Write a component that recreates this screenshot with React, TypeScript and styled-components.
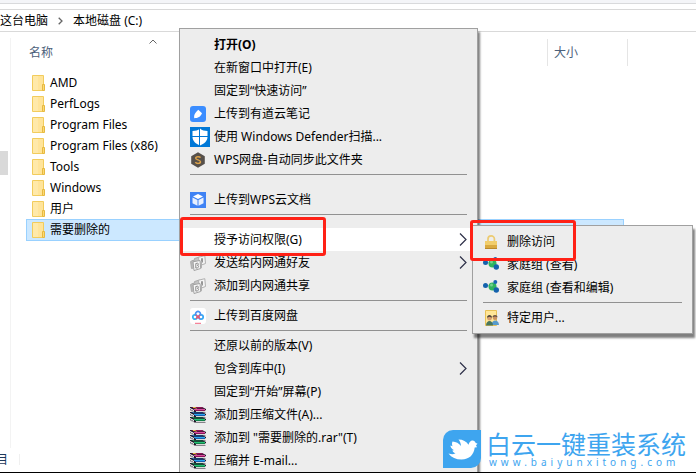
import React from "react";
import styled, { createGlobalStyle, css } from "styled-components";

const GlobalStyle = createGlobalStyle`
  *, *::before, *::after { box-sizing: border-box; }
  body {
    margin: 0;
    background: #fff;
    color: #000;
    font: 12px/16px "Noto Sans", "Noto Sans CJK SC", sans-serif;
  }
  button { font: inherit; color: inherit; }
`;

const Explorer = styled.div`
  position: relative;
  display: flex;
  flex-direction: column;
  height: 100vh;
  overflow: hidden;
  border-bottom: 1px solid #000;
  background: #fff;
`;

const Ribbon = styled.div`
  height: 4px;
  background: #f4f5f8;
  border-bottom: 1px solid #d9dadc;
`;

const AddressBar = styled.nav`
  display: flex;
  align-items: center;
  gap: 10px;
  height: 23px;
  margin-top: 5px;
  border-top: 1px solid #d9d9d9;
  border-bottom: 1px solid #d9d9d9;
`;

const Crumb = styled.a`
  color: #000;
  text-decoration: none;
  white-space: nowrap;
`;

const Body = styled.div`
  display: flex;
  flex: 1;
  min-height: 0;
`;

const NavPane = styled.div`
  width: 11px;
  margin: 6px 0 0;
  padding-top: 113px;
  border-right: 1px solid #f3f3f3;
`;

const ScrollThumb = styled.div`
  width: 8px;
  height: 24px;
  background: #d9d9d9;
`;

const FilePane = styled.main`
  flex: 1;
  min-width: 0;
  padding: 7px 0 0 15px;
`;

const FileTable = styled.table`
  table-layout: fixed;
  width: 602px;
  border-collapse: separate;
  border-spacing: 0;
`;

const HeadCell = styled.th<{ $width: number; $divided?: boolean }>`
  position: relative;
  width: ${(p) => p.$width}px;
  height: 27px;
  padding: 0 0 0 ${(p) => (p.$divided ? 6 : 3)}px;
  border-left: ${(p) => (p.$divided ? "1px solid #e5e5e5" : "0")};
  color: #4c607a;
  font-weight: 400;
  text-align: left;
`;

const EdgeCell = styled.th`
  width: 4px;
  padding: 0;
  border-right: 1px solid #e5e5e5;
`;

const SortArrow = styled.svg`
  position: absolute;
  left: 123px;
  top: 0;
`;

const SpacerCell = styled.td`
  height: 6px;
  padding: 0;
`;

const FileCell = styled.td<{ $selected?: boolean }>`
  height: 21px;
  padding: 0 6px;
  ${(p) =>
    p.$selected &&
    css`
      height: 22px;
      padding: 0 5px;
      background: #cce8ff;
      border: 1px solid #99d1ff;
    `}
`;

const FileName = styled.div`
  display: flex;
  align-items: center;
  gap: 4px;
  height: 20px;
  font-size: 12px;
`;

const StatusBar = styled.footer`
  display: flex;
  align-items: center;
  height: 24px;
  padding-bottom: 1px;
  color: #1e395b;
`;

const StatusLabel = styled.span`
  width: 20px;
  height: 12px;
  margin-left: -4px;
  line-height: 12px;
`;

const StatusDivider = styled.span`
  width: 1px;
  height: 11px;
  margin-left: 3px;
  background: #f0f0f0;
`;

const Menu = styled.div<{ $left: number; $top: number; $width: number }>`
  position: absolute;
  left: ${(p) => p.$left}px;
  top: ${(p) => p.$top}px;
  width: ${(p) => p.$width}px;
  padding: 4px 1px;
  background: #ededed;
  border: 1px solid #a0a0a0;
  box-shadow: 2px 4px 2px rgba(0, 0, 0, 0.5);
`;

const MenuButton = styled.button<{ $bold?: boolean; $active?: boolean }>`
  display: flex;
  align-items: center;
  width: 100%;
  height: 23px;
  padding: 0 9px;
  border: 0;
  background: ${(p) => (p.$active ? "#fff" : "transparent")};
  font-weight: ${(p) => (p.$bold ? 700 : 400)};
  text-align: left;
  white-space: nowrap;
`;

const IconSlot = styled.span`
  display: flex;
  flex: none;
  width: 24px;
`;

const MenuText = styled.span`
  flex: 1;
`;

const Separator = styled.hr<{ $loose?: boolean }>`
  height: 1px;
  margin: 3px 9px ${(p) => (p.$loose ? 13 : 3)}px;
  border: 0;
  background: #919191;
`;

const Highlight = styled.div<{ $left: number; $top: number; $width: number; $height: number }>`
  position: absolute;
  left: ${(p) => p.$left}px;
  top: ${(p) => p.$top}px;
  width: ${(p) => p.$width}px;
  height: ${(p) => p.$height}px;
  border: 3px solid #ff2116;
  border-radius: 3px;
  pointer-events: none;
`;

const Watermark = styled.div`
  position: absolute;
  right: 10px;
  bottom: 4px;
  display: flex;
  align-items: center;
  gap: 5px;
  color: #3ea5ef;
`;

const BrandText = styled.div`
  display: flex;
  flex-direction: column;
`;

const BrandName = styled.span`
  font-size: 25px;
  line-height: 26px;
  font-weight: 400;
  font-family: "Noto Sans CJK SC", sans-serif;
`;

const BrandUrl = styled.span`
  padding-left: 3px;
  font-size: 10px;
  line-height: 12px;
  letter-spacing: 4px;
`;

const Folder = () => (
  <svg width="14" height="16" viewBox="0 0 14 16" aria-hidden="true">
    <path d="M.5.5h11v15H.5z" fill="#ffe49a" stroke="#f2cc5c" />
    <path d="M1 1h5v14H1z" fill="#ffe9a9" />
    <path d="M10.500 9.500h2v6h-2z" fill="#fbd977" stroke="#e7b93f" />
  </svg>
);

const Chevron = () => (
  <svg width="8" height="13" viewBox="0 0 8 13" fill="none" aria-hidden="true">
    <path d="M1 .5l6 6-6 6" stroke="#2d3048" strokeWidth="1.200" />
  </svg>
);

const NoteIcon = () => (
  <svg width="16" height="16" viewBox="0 0 16 16" aria-hidden="true">
    <rect width="16" height="16" rx="3" fill="#3b8dff" />
    <path d="M4.300 12.200C3.800 9.500 4.500 7.500 8.300 3.800L12 7.300c-1.500 3.700-4 4.900-7.700 4.900z" fill="#fff" />
  </svg>
);

const DefenderIcon = () => (
  <svg width="20" height="20" viewBox="0 0 20 20" aria-hidden="true">
    <path d="M0 0h20v20H0z" fill="#0078d7" />
    <path d="M10 1.500C8 3.300 5.500 4 2.500 4v6c0 4 3.500 7 7.500 8.500 4-1.500 7.500-4.500 7.500-8.500V4C14.500 4 12 3.300 10 1.500z" fill="#fff" />
    <path d="M9 1h1v18H9zM2 9h16v1H2z" fill="#0078d7" />
  </svg>
);

const WpsDiskIcon = () => (
  <svg width="16" height="16" viewBox="0 0 16 16" aria-hidden="true">
    <path d="M8 .3l6.800 3.900v7.600L8 15.700l-6.800-3.900V4.200z" fill="#56504b" />
    <path d="M10.500 5.700C9.800 4.300 5.700 4.100 5.700 6.200c0 2 4.800 1.400 4.800 3.600 0 2.100-4.200 2-5.100.3" fill="none" stroke="#dca24a" strokeWidth="1.500" />
  </svg>
);

const CloudDocIcon = () => (
  <svg width="16" height="16" viewBox="0 0 16 16" aria-hidden="true">
    <path d="M0 0h16v16H0z" fill="#3f82f4" />
    <path d="M8 2l5 2.400L8 7 3 4.400z" fill="#fff" />
    <path d="M2.500 5.500L7.500 8v5.800l-5-2.600zM13.500 5.500L8.500 8v5.800l5-2.600z" fill="#e8f0ff" />
  </svg>
);

const ShareIcon = () => (
  <svg width="16" height="16" viewBox="0 0 16 16" aria-hidden="true">
    <path d="M4.500 3.500l5-1.500.5 5-5 1z" fill="#c4c4c4" stroke="#aaa" />
    <path d="M8.500 2.200L14.800.7l.7 7.800-6 2.200z" fill="#f4f4f4" stroke="#b0b0b0" />
    <path d="M12 3.200v4.300" stroke="#777" strokeWidth="1.500" />
    <path d="M.6 6.500L3.500 5v8l-2 .5z" fill="#b9b9b9" stroke="#aaa" />
    <path d="M3 6.800l7-1.300.7 8-6.700 2z" fill="#f8f8f8" stroke="#a2a2a2" />
    <path d="M10.500 6.500l1.500-.7v7l-1.300.7z" fill="#b0b0b0" />
    <path d="M5.800 8.500l1.700-.3c1.300 0 1 1.900-.2 2.100 1.800 0 1.600 2.300.1 2.600l-1.600.2z" fill="none" stroke="#8a8a8a" />
  </svg>
);

const BaiduIcon = () => (
  <svg width="16" height="16" viewBox="0 0 16 16" fill="none" aria-hidden="true">
    <rect width="16" height="16" rx="3" fill="#fff" />
    <circle cx="5" cy="9" r="2.200" stroke="#35b5f5" strokeWidth="1.700" />
    <circle cx="11" cy="9" r="2.200" stroke="#35a5f5" strokeWidth="1.700" />
    <path d="M6 7.200a2.400 2.400 0 114 0" stroke="#4993f5" strokeWidth="1.600" />
    <path d="M6 7l4 3.800M10 7l-4 3.800" stroke="#f1516e" strokeWidth="1.500" />
    <path d="M5 15.300h6" stroke="#f46480" />
  </svg>
);

const Book = ({ y, fill, light }: { y: number; fill: string; light: string }) => (
  <g transform={`translate(0 ${y})`}>
    <path d="M0 0h12l4 2v1l-1 .5V5l1 .5H4.500L0 3.500z" fill="#201829" />
    <path d="M1 0h10.500l3 1.500H4z" fill={fill} />
    <path d="M4 2h11v1H4z" fill={light} />
    <path d="M5 3h10v1H5z" fill={fill} />
    <path d="M6 4h9v1H6z" fill="#d8d8d8" />
    <path d="M0 1l4 2v1.200L0 2z" fill="#fff" />
    <path d="M0 3l4 2" stroke="#fff" strokeWidth=".7" />
  </g>
);

const RarIcon = () => (
  <svg width="16" height="16" viewBox="0 0 16 16" aria-hidden="true">
    <Book y={10} fill="#12824a" light="#24c475" />
    <Book y={5} fill="#155fae" light="#2ba4ef" />
    <Book y={0} fill="#8c1457" light="#d94ca0" />
    <path d="M3 .5h2l1.500 1" fill="none" stroke="#e0c23a" />
  </svg>
);

const LockIcon = () => (
  <svg width="16" height="16" viewBox="0 0 16 16" aria-hidden="true">
    <path d="M5 8V5a3.200 3.200 0 016.400 0v3" fill="none" stroke="#eccb72" strokeWidth="1.700" />
    <path d="M2 7h12v4H2z" fill="#f1cd6b" />
    <path d="M2 11h12v4H2z" fill="#d9a93f" />
    <path d="M2 14h12v1H2z" fill="#b9882b" />
  </svg>
);

const HomegroupIcon = () => (
  <svg width="16" height="16" viewBox="0 0 16 16" aria-hidden="true">
    <path d="M3 5.500h6l3-4M9 6l4 4" fill="none" stroke="#b5cad9" />
    <circle cx="9.500" cy="6.500" r="4" fill="#2fb35e" />
    <circle cx="8.500" cy="5" r="1.500" fill="#73d28f" />
    <circle cx="2.500" cy="5.500" r="2.500" fill="#1462ad" />
    <circle cx="12.300" cy="2" r="2" fill="#1766b4" />
    <circle cx="13.300" cy="10" r="2.700" fill="#1462ad" />
  </svg>
);

const UsersIcon = () => (
  <svg width="16" height="16" viewBox="0 0 16 16" aria-hidden="true">
    <path d="M2.500.5h11v15h-11z" fill="#ffe698" stroke="#e8c157" />
    <circle cx="12" cy="7.800" r="2.200" fill="#c99261" />
    <path d="M9.500 7.300c0-3.200 5-3.200 5 0L12 6.500z" fill="#6b5344" />
    <path d="M8.500 15c0-6 7.500-6 7.500 0z" fill="#579acb" />
    <circle cx="6.500" cy="8.300" r="2.300" fill="#d6a071" />
    <path d="M4 7.800c0-3.600 5-3.600 5 0L6.500 6.800z" fill="#4e433a" />
    <path d="M3 15.500c0-6 7-6 7 0z" fill="#48765c" />
  </svg>
);

const BirdLogo = () => (
  <svg width="38" height="38" viewBox="0 0 38 38" aria-hidden="true">
    <path d="M10 0h28v28a10 10 0 01-10 10H0V10A10 10 0 0110 0z" fill="#3ea5ef" />
    <path
      d="M9.500 11.500c3.500.3 6.500 1.800 8.500 4.500-.2-2.800-1.200-5-2.500-6.500 4.500 0 8 2 10 5.300.8-3 2.700-4.800 5-4 1 .3 1.700 1 2 2l2 1-1.500 1.500 1 2-2.300.2C31 24.500 26.500 29.500 18.500 29.500c-5.500 0-10-2-13-6 3 .9 5 .9 7-.2-2-.7-2.900-1.800-3-3l1.700-.1C8.700 19 7.300 17.200 7.500 15.500l2 .7c-.6-1.500-.7-3 0-4.700z"
      fill="#fff"
    />
  </svg>
);

type Item = {
  label?: string;
  icon?: React.ReactNode;
  bold?: boolean;
  active?: boolean;
  submenu?: boolean;
  loose?: boolean;
};

const contextItems: Item[] = [
  { label: "打开(O)", bold: true },
  { label: "在新窗口中打开(E)" },
  { label: "固定到“快速访问”" },
  { label: "上传到有道云笔记", icon: <NoteIcon /> },
  { label: "使用 Windows Defender扫描...", icon: <DefenderIcon /> },
  { label: "WPS网盘-自动同步此文件夹", icon: <WpsDiskIcon /> },
  { loose: true },
  { label: "上传到WPS云文档", icon: <CloudDocIcon /> },
  { loose: true },
  { label: "授予访问权限(G)", active: true, submenu: true },
  { label: "发送给内网通好友", icon: <ShareIcon />, submenu: true },
  { label: "添加到内网通共享", icon: <ShareIcon /> },
  {},
  { label: "上传到百度网盘", icon: <BaiduIcon /> },
  {},
  { label: "还原以前的版本(V)" },
  { label: "包含到库中(I)", submenu: true },
  { label: "固定到“开始”屏幕(P)" },
  { label: "添加到压缩文件(A)...", icon: <RarIcon /> },
  { label: '添加到 "需要删除的.rar"(T)', icon: <RarIcon /> },
  { label: "压缩并 E-mail...", icon: <RarIcon /> },
];

const accessItems: Item[] = [
  { label: "删除访问", icon: <LockIcon /> },
  { label: "家庭组 (查看)", icon: <HomegroupIcon /> },
  { label: "家庭组 (查看和编辑)", icon: <HomegroupIcon /> },
  {},
  { label: "特定用户...", icon: <UsersIcon /> },
];

const folders = ["AMD", "PerfLogs", "Program Files", "Program Files (x86)", "Tools", "Windows", "用户", "需要删除的"];

const MenuItems = ({ items }: { items: Item[] }) => (
  <>
    {items.map((item, i) =>
      item.label ? (
        <MenuButton key={i} type="button" role="menuitem" $bold={item.bold} $active={item.active}>
          <IconSlot>{item.icon}</IconSlot>
          <MenuText>{item.label}</MenuText>
          {item.submenu && <Chevron />}
        </MenuButton>
      ) : (
        <Separator key={i} $loose={item.loose} />
      )
    )}
  </>
);

export default function App() {
  return (
    <>
      <GlobalStyle />
      <Explorer>
        <Ribbon />
        <AddressBar>
          <Crumb href="#pc">这台电脑</Crumb>
          <svg width="5" height="8" viewBox="0 0 5 8" fill="none" aria-hidden="true">
            <path d="M.7.7L4 4 .7 7.300" stroke="#666" strokeWidth="1.300" />
          </svg>
          <Crumb href="#c">本地磁盘 (C:)</Crumb>
        </AddressBar>
        <Body>
          <NavPane>
            <ScrollThumb />
          </NavPane>
          <FilePane>
            <FileTable>
              <thead>
                <tr>
                  <HeadCell $width={521}>
                    名称
                    <SortArrow width="8" height="5" viewBox="0 0 8 5" fill="none" aria-hidden="true">
                      <path d="M.5 4.500L4 1l3.500 3.500" stroke="#666" />
                    </SortArrow>
                  </HeadCell>
                  <HeadCell $width={77} $divided>
                    大小
                  </HeadCell>
                  <EdgeCell />
                </tr>
              </thead>
              <tbody>
                <tr>
                  <SpacerCell colSpan={3} />
                </tr>
                {folders.map((name, i) => (
                  <tr key={name}>
                    <FileCell colSpan={2} $selected={i === folders.length - 1}>
                      <FileName>
                        <Folder />
                        {name}
                      </FileName>
                    </FileCell>
                  </tr>
                ))}
              </tbody>
            </FileTable>
          </FilePane>
        </Body>
        <StatusBar>
          <StatusLabel>目</StatusLabel>
          <StatusDivider />
        </StatusBar>

        <Menu role="menu" $left={179} $top={28} $width={299}>
          <MenuItems items={contextItems} />
        </Menu>
        <Menu role="menu" $left={472} $top={225} $width={221}>
          <MenuItems items={accessItems} />
        </Menu>
        <Highlight $left={180} $top={217} $width={146} $height={39} />
        <Highlight $left={470} $top={220} $width={106} $height={41} />

        <Watermark>
          <BirdLogo />
          <BrandText>
            <BrandName>白云一键重装系统</BrandName>
            <BrandUrl>www.baiyunxitong.com</BrandUrl>
          </BrandText>
        </Watermark>
      </Explorer>
    </>
  );
}
